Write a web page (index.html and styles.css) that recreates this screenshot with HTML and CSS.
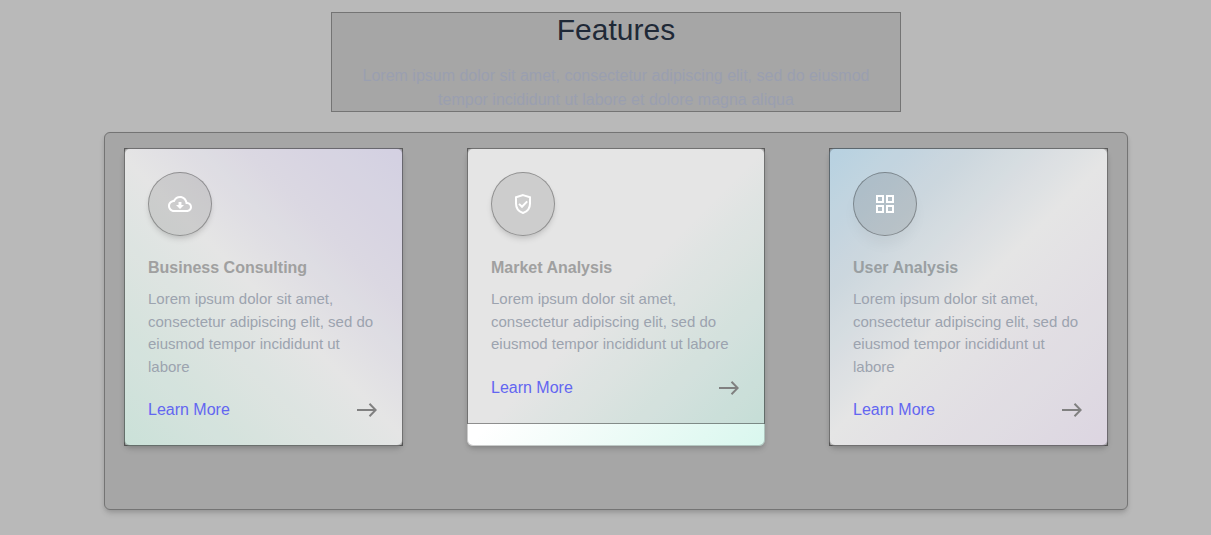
FILE: index.html
```html
<!DOCTYPE html>
<html lang="en">
<head>
<meta charset="utf-8">
<title>Features</title>
<link rel="stylesheet" href="styles.css">
</head>
<body>
<section class="features">
  <header class="intro">
    <h2 class="intro-title">Features</h2>
    <p class="intro-text">Lorem ipsum dolor sit amet, consectetur adipiscing elit, sed do eiusmod tempor incididunt ut labore et dolore magna aliqua</p>
  </header>
  <div class="panel">
    <article class="card card-consulting">
      <div class="card-body">
        <div class="badge">
          <svg class="icon" viewBox="0 0 24 24"><path d="M19.35 10.04C18.67 6.59 15.64 4 12 4 9.11 4 6.6 5.64 5.35 8.04 2.34 8.36 0 10.91 0 14c0 3.31 2.69 6 6 6h13c2.76 0 5-2.24 5-5 0-2.64-2.05-4.78-4.65-4.96zM19 18H6c-2.21 0-4-1.79-4-4 0-2.05 1.53-3.76 3.56-3.97l1.07-.11.5-.95C8.08 7.14 9.94 6 12 6c2.62 0 4.88 1.86 5.39 4.43l.3 1.5 1.53.11c1.56.1 2.78 1.41 2.78 2.96 0 1.65-1.35 3-3 3zm-5.55-8h-2.9v3H8l4 4 4-4h-2.55z"/></svg>
        </div>
        <h3 class="card-title">Business Consulting</h3>
        <p class="card-text">Lorem ipsum dolor sit amet, consectetur adipiscing elit, sed do eiusmod tempor incididunt ut labore</p>
        <div class="card-link"><a class="link">Learn More</a><svg class="arrow" viewBox="0 0 20 14"><path d="M0 7h19M12.5 .8 18.7 7l-6.2 6.2"/></svg></div>
      </div>
    </article>
    <article class="card card-market">
      <div class="card-body">
        <div class="badge">
          <svg class="icon" viewBox="0 0 24 24"><path class="line" d="M12 3.1 19 5.2v6.3c0 4.4-2.6 8.1-7 9.5-4.4-1.4-7-5.1-7-9.5V5.2z"/><path class="line" d="m8 11.9 3 2.9 5.2-5.4"/></svg>
        </div>
        <h3 class="card-title">Market Analysis</h3>
        <p class="card-text">Lorem ipsum dolor sit amet, consectetur adipiscing elit, sed do eiusmod tempor incididunt ut labore</p>
        <div class="card-link"><a class="link">Learn More</a><svg class="arrow" viewBox="0 0 20 14"><path d="M0 7h19M12.5 .8 18.7 7l-6.2 6.2"/></svg></div>
      </div>
    </article>
    <article class="card card-user">
      <div class="card-body">
        <div class="badge">
          <svg class="icon" viewBox="0 0 24 24"><path class="line" d="M4 4h6v6H4zM14 4h6v6h-6zM4 14h6v6H4zM14 14h6v6h-6z"/></svg>
        </div>
        <h3 class="card-title">User Analysis</h3>
        <p class="card-text">Lorem ipsum dolor sit amet, consectetur adipiscing elit, sed do eiusmod tempor incididunt ut labore</p>
        <div class="card-link"><a class="link">Learn More</a><svg class="arrow" viewBox="0 0 20 14"><path d="M0 7h19M12.5 .8 18.7 7l-6.2 6.2"/></svg></div>
      </div>
    </article>
  </div>
</section>
</body>
</html>
```
FILE: styles.css
```css
* { box-sizing: border-box; }
body {
  min-height: 100vh;
  margin: 0;
  background: #b9b9b9;
  font-family: "Liberation Sans", Arial, sans-serif;
  font-size: 16px;
  line-height: 24px;
}
h2, h3, p { margin: 0; }
.features {
  width: 1024px;
  margin-left: 104px;
  padding-top: 12px;
}
.intro {
  width: 570px;
  height: 100px;
  margin: 0 auto 20px;
  padding: 0 24px;
  text-align: center;
  background: #a6a6a6;
  outline: 1px solid #747474;
  outline-offset: -1px;
}
.intro-title {
  margin-bottom: 16px;
  font-size: 30px;
  font-weight: 400;
  line-height: 36px;
  color: #1f2937;
}
.intro-text { color: #9a9fb0; }
.panel {
  display: flex;
  gap: 64px;
  height: 378px;
  padding: 16px 20px 64px;
  border-radius: 6px;
  background: #a6a6a6;
  outline: 1px solid #747474;
  outline-offset: -1px;
  box-shadow: 0 4px 6px -1px rgba(0, 0, 0, .14), 0 2px 4px -1px rgba(0, 0, 0, .1);
}
.card {
  width: 279px;
  height: 298px;
  border-radius: 6px;
  box-shadow: 0 4px 6px -1px rgba(0, 0, 0, .14), 0 2px 4px -1px rgba(0, 0, 0, .1), inset 0 0 0 1px rgba(0, 0, 0, .2);
}
.card-market { width: 298px; }
.card-consulting { background: linear-gradient(45deg, #e2fbf1, #fff 50%, #f4f1fc 72%, #ece8fc); }
.card-market { background: linear-gradient(135deg, #fff 50%, #d9f7ee); }
.card-user { background: linear-gradient(135deg, #cce9fb, #e4f0f8 25%, #fff 50%, #f6eefb); }
.card-body {
  padding: 24px;
  background: rgba(0, 0, 0, .1);
  outline: 1px solid rgba(0, 0, 0, .38);
  outline-offset: -1px;
}
.badge {
  display: flex;
  align-items: center;
  justify-content: center;
  width: 64px;
  height: 64px;
  margin-bottom: 20px;
  border: 1px solid rgba(0, 0, 0, .3);
  border-radius: 50%;
  background: rgba(0, 0, 0, .1);
  box-shadow: 0 4px 6px -1px rgba(0, 0, 0, .12), 0 2px 4px -1px rgba(0, 0, 0, .06);
}
.card-user .badge { box-shadow: 0 10px 15px -3px rgba(0, 0, 0, .05); }
.icon { width: 24px; height: 24px; fill: #fff; }
.line { fill: none; stroke: #fff; stroke-width: 2; }
.card-title {
  margin-bottom: 8px;
  font-size: 16px;
  font-weight: 700;
  line-height: 24px;
  color: #a0a0a0;
}
.card-user .card-title { color: #999fa2; }
.card-text {
  margin-bottom: 20px;
  font-size: 15px;
  line-height: 22.5px;
  color: #9ca3af;
}
.card-link {
  display: flex;
  align-items: center;
  justify-content: space-between;
}
.link { color: #6366f1; }
.arrow {
  width: 20px;
  height: 14px;
  margin-right: 2px;
  fill: none;
  stroke: #808080;
  stroke-width: 2;
}
```
